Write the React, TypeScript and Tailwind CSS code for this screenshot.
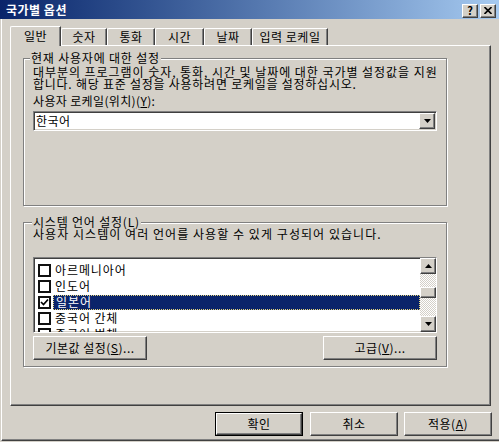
import React from "react";

const raised =
  "border border-t-white border-l-white border-r-[#404040] border-b-[#404040] shadow-[inset_-1px_-1px_0_#808080]";
const sunken =
  "border border-t-[#808080] border-l-[#808080] border-r-white border-b-white shadow-[inset_1px_1px_0_#404040,inset_-1px_-1px_0_#d4d0c8]";
const etched = "border border-[#808080] shadow-[inset_1px_1px_0_#fff,1px_1px_0_#fff]";

const TABS = [
  { label: "숫자", w: "w-[46px]" },
  { label: "통화", w: "w-[48px]" },
  { label: "시간", w: "w-[49px]" },
  { label: "날짜", w: "w-[48px]" },
  { label: "입력 로케일", w: "w-[76px]" },
];

const LANGS = [
  { name: "아르메니아어", checked: false },
  { name: "인도어", checked: false },
  { name: "일본어", checked: true, selected: true },
  { name: "중국어 간체", checked: false },
  { name: "중국어 번체", checked: false },
];

function Arrow({ up }: { up?: boolean }) {
  return (
    <svg width="7" height="4" viewBox="0 0 7 4">
      <path d={up ? "M3.5 0 L7 4 L0 4 Z" : "M0 0 L7 0 L3.5 4 Z"} fill="#000" />
    </svg>
  );
}

function Check({ on }: { on: boolean }) {
  return (
    <div className="w-[13px] h-[13px] shrink-0 bg-white border-2 border-[#101010] flex items-center justify-center">
      {on && (
        <svg width="9" height="9" viewBox="0 0 9 9">
          <path d="M1 4 L3.5 6.5 L8 1.5" stroke="#000" strokeWidth="1.7" fill="none" />
        </svg>
      )}
    </div>
  );
}

function Btn({ children, w, def, extra = "" }: { children: React.ReactNode; w: string; def?: boolean; extra?: string }) {
  const inner = (
    <div className={`${raised} h-full w-full flex items-center justify-center text-[12px] leading-none tracking-[0.5px]`}>
      {children}
    </div>
  );
  return def ? (
    <div className={`${w} h-[24px] border border-black ${extra}`}>{inner}</div>
  ) : (
    <div className={`${w} h-[24px] ${extra}`}>{inner}</div>
  );
}

function Group({ label, left, h, children }: { label: string; left: string; h: string; children: React.ReactNode }) {
  return (
    <div className={`relative w-[424px] ${h} ${etched}`}>
      <span className={`absolute -top-[7px] ${left} bg-[#d4d0c8] px-px text-[12px] leading-[12px] tracking-[0.8px]`}>
        {label}
      </span>
      {children}
    </div>
  );
}

export default function App() {
  return (
    <div className="w-[499px] h-[442px] bg-[#d4d0c8] flex flex-col overflow-hidden font-['Noto_Sans_CJK_KR',sans-serif] text-black">
      {/* title bar */}
      <div className="h-[19px] shrink-0 flex items-center justify-between bg-gradient-to-r from-[#0a246a] to-[#a6caf0]">
        <span className="pl-[6px] text-white font-bold text-[12px] leading-none tracking-[0.5px]">국가별 옵션</span>
        <div className="flex gap-[2px] pr-[3px] pt-[2px]">
          <div className={`${raised} w-[16px] h-[14px] bg-[#d4d0c8] flex items-center justify-center text-[11px] font-bold leading-none`}>
            ?
          </div>
          <div className={`${raised} w-[16px] h-[14px] bg-[#d4d0c8] flex items-center justify-center`}>
            <svg width="8" height="7" viewBox="0 0 8 7">
              <path d="M0.5 0 L7.5 7 M7.5 0 L0.5 7" stroke="#000" strokeWidth="1.6" />
            </svg>
          </div>
        </div>
      </div>

      {/* body */}
      <div className="flex-1 ml-px border-l border-white mb-px border-b border-b-[#404040] shadow-[inset_0_-1px_0_#808080] flex flex-col">
        {/* tabs */}
        <div className="mt-[7px] h-[19px] pl-[8px] flex items-end text-[12px] tracking-[0.5px]">
          <div className="relative z-10 -mb-px w-[51px] h-[20px] bg-[#d4d0c8] border-t border-l border-r border-t-white border-l-white border-r-[#404040] rounded-tl-[2px] shadow-[inset_-1px_0_0_#808080] flex items-center justify-center leading-none pb-[2px]">
            일반
          </div>
          {TABS.map(t => (
            <div
              key={t.label}
              className={`${t.w} h-[17px] border-t border-l border-r border-t-white border-l-white border-r-[#404040] rounded-tl-[2px] shadow-[inset_-1px_0_0_#808080] flex items-center justify-center leading-none`}>
              {t.label}
            </div>
          ))}
        </div>

        {/* panel */}
        <div className="ml-[8px] w-[481px] h-[361px] border border-t-white border-l-white border-r-[#404040] border-b-[#404040] shadow-[inset_-1px_-1px_0_#808080] pl-[12px] pt-[12px]">
          <Group label="현재 사용자에 대한 설정" left="left-[6px]" h="h-[148px]">
            <div className="pl-[9px] pt-[7px] text-[12px]">
              <p className="leading-[11px] tracking-[0.95px] whitespace-nowrap">
                대부분의 프로그램이 숫자, 통화, 시간 및 날짜에 대한 국가별 설정값을 지원
              </p>
              <p className="mt-px leading-[11px] tracking-[0.75px] whitespace-nowrap">
                합니다. 해당 표준 설정을 사용하려면 로케일을 설정하십시오.
              </p>
              <p className="mt-[6px] leading-[12px] tracking-[0.35px]">
                사용자 로케일(위치)(<u>Y</u>):
              </p>
              <div className={`mt-[4px] w-[404px] h-[20px] bg-white ${sunken} flex items-center justify-between pl-[2px]`}>
                <span className="leading-none tracking-[0.5px]">한국어</span>
                <div className={`${raised} w-[16px] h-[16px] mr-px bg-[#d4d0c8] flex items-center justify-center`}>
                  <Arrow />
                </div>
              </div>
            </div>
          </Group>

          <div className="mt-[16px]">
            <Group label="시스템 언어 설정(L)" left="left-[8px]" h="h-[145px]">
              <div className="pl-[9px] pt-[5px] text-[12px]">
                <p className="leading-[11px] tracking-[1.05px] whitespace-nowrap">
                  사용자 시스템이 여러 언어를 사용할 수 있게 구성되어 있습니다.
                </p>
                <div className={`mt-[18px] w-[404px] h-[76px] bg-white ${sunken} flex`}>
                  <div className="flex-1 pl-[4px] pt-[4px] overflow-hidden">
                    {LANGS.map(l => (
                      <div key={l.name} className="h-[16px] flex items-center gap-[2px]">
                        <Check on={l.checked} />
                        <span
                          className={`h-[15px] flex items-center pl-[2px] leading-none tracking-[0.9px] ${
                            l.selected
                              ? "flex-1 bg-[#0a246a] text-white border border-dotted border-[#e6d67a]"
                              : ""
                          }`}>
                          {l.name}
                        </span>
                      </div>
                    ))}
                  </div>
                  <div className="w-[16px] flex flex-col">
                    <div className={`${raised} h-[16px] bg-[#d4d0c8] flex items-center justify-center`}>
                      <Arrow up />
                    </div>
                    <div className="flex-1 bg-[image:repeating-conic-gradient(#fff_0_25%,#d4d0c8_0_50%)] bg-[length:2px_2px] pt-[13px]">
                      <div className={`${raised} h-[11px] bg-[#d4d0c8]`} />
                    </div>
                    <div className={`${raised} h-[16px] bg-[#d4d0c8] flex items-center justify-center`}>
                      <Arrow />
                    </div>
                  </div>
                </div>
                <div className="mt-[3px] w-[404px] flex justify-between">
                  <Btn w="w-[114px]">
                    기본값 설정(<u>S</u>)...
                  </Btn>
                  <Btn w="w-[114px]">
                    고급(<u>V</u>)...
                  </Btn>
                </div>
              </div>
            </Group>
          </div>
        </div>

        {/* dialog buttons */}
        <div className="mt-[6px] pr-[7px] flex justify-end gap-[6px] text-[12px]">
          <Btn w="w-[88px]" def extra="mr-px">
            확인
          </Btn>
          <Btn w="w-[88px]">취소</Btn>
          <Btn w="w-[88px]">
            적용(<u>A</u>)
          </Btn>
        </div>
      </div>
    </div>
  );
}
